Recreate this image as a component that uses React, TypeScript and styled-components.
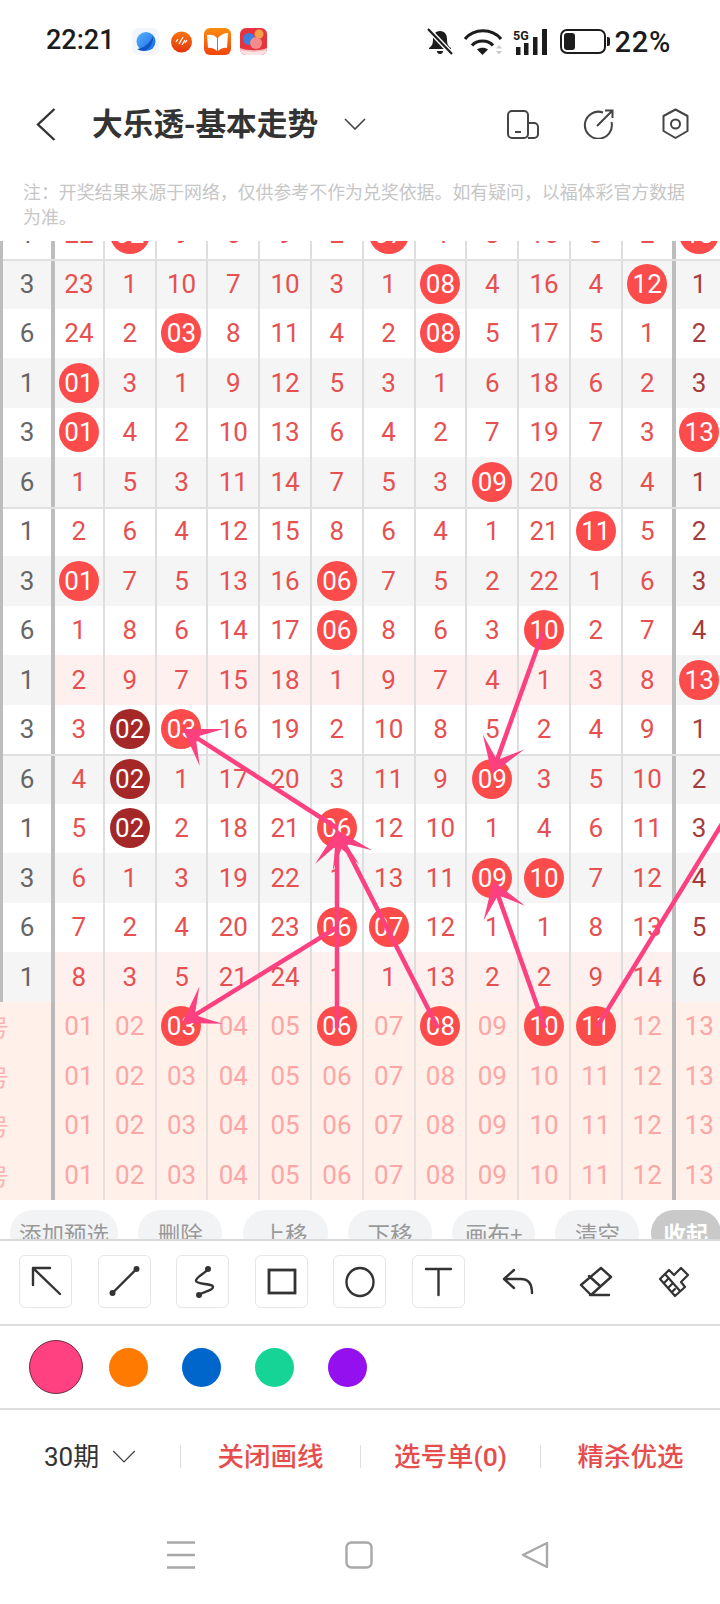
import React from "react";
import styled, { createGlobalStyle } from "styled-components";

const GlobalStyle = createGlobalStyle`
  html, body {
    margin: 0;
    padding: 0;
    background: #fff;
  }
  body {
    width: 720px;
    height: 1604px;
    overflow: hidden;
    font-family: Roboto, "Noto Sans CJK SC", sans-serif;
  }
  * { box-sizing: border-box; }
`;

const Page = styled.div`
  width: 720px;
  height: 1604px;
  overflow: hidden;
  display: flex;
  flex-direction: column;
  background: #fff;
`;

/* status bar */
const StatusBar = styled.div`
  height: 83px;
  flex: none;
  display: flex;
  align-items: center;
  padding: 0 49px 0 46px;
  color: #1c1c1c;
`;

const Clock = styled.div`
  font-size: 27px;
  font-weight: 500;
  width: 86px;
  padding-bottom: 3px;
`;

const AppIcons = styled.div`
  display: flex;
  gap: 9px;
`;

const StatusRight = styled.div`
  margin-left: auto;
  display: flex;
  align-items: center;
  gap: 11px;
`;

const Battery = styled.div`
  margin-left: 1px;
  width: 46px;
  height: 25px;
  border: 2px solid #1c1c1c;
  border-radius: 7px;
  padding: 2px 0 2px 2px;
  position: relative;
  &::before {
    content: "";
    display: block;
    width: 11px;
    height: 100%;
    border-radius: 3px;
    background: #1c1c1c;
  }
  &::after {
    content: "";
    position: absolute;
    right: -6px;
    top: 6px;
    width: 3px;
    height: 9px;
    border-radius: 0 2px 2px 0;
    background: #1c1c1c;
  }
`;

const Percent = styled.div`
  margin-left: -2px;
  font-size: 29px;
  font-weight: 500;
  letter-spacing: 0.7px;
`;

/* title bar */
const NavBar = styled.div`
  height: 82px;
  flex: none;
  display: flex;
  align-items: center;
  padding-left: 36px;
  color: #333;
`;

const Title = styled.div`
  margin-left: 36px;
  padding-bottom: 5px;
  font-size: 30.7px;
  font-weight: 700;
  font-family: "Noto Sans CJK SC", sans-serif;
  color: #333;
  width: 252px;
  white-space: nowrap;
`;

const NavIcons = styled.div`
  display: flex;
  margin-left: 141px;
  gap: 44px;
  align-items: center;
  & > svg:last-child {
    margin-left: 3px;
  }
`;

const Note = styled.div`
  height: 76px;
  flex: none;
  padding: 14px 30px 0 23px;
  font-family: "Noto Sans CJK SC", sans-serif;
  font-size: 17.9px;
  line-height: 25px;
  color: #c6c6c6;
`;

/* trend board */
const Board = styled.div`
  position: relative;
  height: 958.5px;
  flex: none;
  overflow: hidden;
`;

const Rows = styled.div`
  margin-top: -31.5px;
`;

type Tone = "white" | "gray" | "pink" | "draw";

const toneColor: Record<Tone, string> = {
  white: "#fff",
  gray: "#f5f5f5",
  pink: "#fff0f0",
  draw: "#fff0ea",
};

const Row = styled.div<{ $group?: boolean }>`
  position: relative;
  display: grid;
  grid-template-columns: 55px 49.8px repeat(10, 51.8px) 52.9px 47px;
  width: 722.7px;
  height: 49.5px;
  &::after {
    content: "";
    display: ${(p) => (p.$group ? "block" : "none")};
    position: absolute;
    left: 3px;
    right: 0;
    top: 0;
    height: 2px;
    background: #e0e0e0;
  }
`;

const PeriodCell = styled.div<{ $tone: Tone }>`
  display: flex;
  align-items: center;
  justify-content: center;
  font-size: 26px;
  color: #666;
  background: ${(p) => toneColor[p.$tone]};
  border-left: 3px solid #bdbdbd;
  border-right: 4px solid #bdbdbd;
`;

const LabelCell = styled.div`
  overflow: hidden;
  display: flex;
  align-items: center;
  background: #fff0ea;
  border-right: 4px solid #bdb8b8;
  font-family: "Noto Sans CJK SC", sans-serif;
  font-size: 23px;
  color: #fdb0b0;
`;

const LabelText = styled.span`
  flex: none;
  margin-left: -37px;
`;

const Cell = styled.div<{ $tone: Tone; $thick?: boolean; $last?: boolean }>`
  display: flex;
  align-items: center;
  justify-content: center;
  font-size: 26px;
  overflow: visible;
  background: ${(p) => toneColor[p.$tone]};
  color: ${(p) => (p.$tone === "draw" ? "#fca6a6" : p.$last ? "#a53c3c" : "#e65050")};
  border-right: ${(p) => {
    if (p.$last) return "none";
    if (p.$thick) return `4px solid ${p.$tone === "draw" ? "#bdb8b8" : "#bdbdbd"}`;
    return `2px solid ${p.$tone === "draw" ? "#e6dfdc" : "#dedede"}`;
  }};
`;

const Ball = styled.div<{ $dark?: boolean }>`
  flex: none;
  width: 40px;
  height: 40px;
  border-radius: 50%;
  display: flex;
  align-items: center;
  justify-content: center;
  color: #fff;
  background: ${(p) => (p.$dark ? "#a42828" : "#fb4b4b")};
`;

const ArrowLayer = styled.svg`
  position: absolute;
  left: 0;
  top: 0;
  pointer-events: none;
`;

/* chips */
const ChipRow = styled.div`
  height: 39.5px;
  flex: none;
  overflow: hidden;
  padding: 10px 0 0 10px;
  display: flex;
  gap: 20.3px;
`;

const Chip = styled.div<{ $width: number; $active?: boolean }>`
  flex: none;
  width: ${(p) => p.$width}px;
  height: 46px;
  margin-left: ${(p) => (p.$active ? -9 : 0)}px;
  border-radius: 23px;
  display: flex;
  align-items: center;
  justify-content: center;
  font-family: "Noto Sans CJK SC", sans-serif;
  font-size: 22.5px;
  white-space: nowrap;
  color: ${(p) => (p.$active ? "#fff" : "#999")};
  font-weight: ${(p) => (p.$active ? 700 : 400)};
  background: ${(p) => (p.$active ? "#c9c9c9" : "#f2f3f5")};
`;

/* drawing panel */
const ToolRow = styled.div`
  height: 87px;
  flex: none;
  border-top: 2px solid #d9d9d9;
  border-bottom: 2px solid #dedede;
  padding: 14px 0 0 19px;
  display: flex;
  gap: 25.6px;
`;

const ToolButton = styled.div<{ $plain?: boolean }>`
  flex: none;
  width: 53px;
  height: 53px;
  border-radius: 6px;
  border: 1px solid ${(p) => (p.$plain ? "transparent" : "#e6e6e6")};
`;

const ColorRow = styled.div`
  height: 84px;
  flex: none;
  border-bottom: 2px solid #dedede;
  padding-left: 29px;
  display: flex;
  align-items: center;
`;

const Swatch = styled.div<{ $color: string; $selected?: boolean }>`
  flex: none;
  width: ${(p) => (p.$selected ? 54 : 39)}px;
  height: ${(p) => (p.$selected ? 54 : 39)}px;
  margin-right: ${(p) => (p.$selected ? 26 : 34)}px;
  border-radius: 50%;
  background: ${(p) => p.$color};
  border: ${(p) => (p.$selected ? "1px solid #6b2a45" : "none")};
`;

/* bottom actions */
const ActionBar = styled.div`
  height: 95px;
  flex: none;
  display: grid;
  grid-template-columns: 180px 180px 180px 180px;
  align-items: center;
  padding-bottom: 2px;
`;

const Action = styled.div<{ $divider?: boolean }>`
  height: 23px;
  display: flex;
  align-items: center;
  justify-content: center;
  border-left: ${(p) => (p.$divider ? "1px solid #ddd" : "none")};
  font-family: Roboto, "Noto Sans CJK SC", sans-serif;
  font-size: 26.5px;
  font-weight: 500;
  color: #e64d4d;
`;

// text sits a little above the middle of the divider
const ActionText = styled.span`
  position: relative;
  top: -2px;
`;

const PeriodPick = styled.div`
  display: flex;
  align-items: center;
  gap: 13px;
  margin-left: 44px;
  height: 23px;
  font-size: 26px;
  color: #333;
`;

const SystemBar = styled.div`
  flex: 1;
  display: flex;
  padding: 36px 0 0 167px;
  gap: 150px;
  & > svg:last-child {
    margin-left: -2px;
  }
`;

interface ArrowProps {
  from: [number, number];
  to: [number, number];
}

// arrow like the app draws it: thin shaft with a swept back head
const Arrow = ({ from, to }: ArrowProps) => {
  const dx = from[0] - to[0];
  const dy = from[1] - to[1];
  const len = Math.hypot(dx, dy);
  const bx = dx / len;
  const by = dy / len;
  const at = (back: number, side: number) =>
    `${to[0] + bx * back - by * side},${to[1] + by * back + bx * side}`;
  const neck = at(15, 0).split(",");
  return (
    <g>
      <line x1={from[0]} y1={from[1]} x2={neck[0]} y2={neck[1]} stroke="#fd4080" strokeWidth={4.5} />
      <polygon points={`${at(0, 0)} ${at(34, 22)} ${at(15, 0)} ${at(34, -22)}`} fill="#fd4080" />
    </g>
  );
};

const arrows: ArrowProps[] = [
  { from: [543, 632], to: [492, 774] },
  { from: [545, 1028], to: [493, 881] },
  { from: [597, 1027], to: [800, 697] },
  { from: [438, 1028], to: [337, 830] },
  { from: [337, 1028], to: [337, 830] },
  { from: [336, 928], to: [182, 1023] },
  { from: [337, 828], to: [183, 729] },
];

// [nn] is a red ball, {nn} a dark one
const history: [string, Tone, string][] = [
  ["1", "white", "22 [02] 9 6 9 2 [07] 4 3 15 3 2 [13]"],
  ["3", "gray", "23 1 10 7 10 3 1 [08] 4 16 4 [12] 1"],
  ["6", "white", "24 2 [03] 8 11 4 2 [08] 5 17 5 1 2"],
  ["1", "gray", "[01] 3 1 9 12 5 3 1 6 18 6 2 3"],
  ["3", "white", "[01] 4 2 10 13 6 4 2 7 19 7 3 [13]"],
  ["6", "gray", "1 5 3 11 14 7 5 3 [09] 20 8 4 1"],
  ["1", "white", "2 6 4 12 15 8 6 4 1 21 [11] 5 2"],
  ["3", "gray", "[01] 7 5 13 16 [06] 7 5 2 22 1 6 3"],
  ["6", "white", "1 8 6 14 17 [06] 8 6 3 [10] 2 7 4"],
  ["1", "pink", "2 9 7 15 18 1 9 7 4 1 3 8 [13]"],
  ["3", "white", "3 {02} [03] 16 19 2 10 8 5 2 4 9 1"],
  ["6", "gray", "4 {02} 1 17 20 3 11 9 [09] 3 5 10 2"],
  ["1", "white", "5 {02} 2 18 21 [06] 12 10 1 4 6 11 3"],
  ["3", "gray", "6 1 3 19 22 1 13 11 [09] [10] 7 12 4"],
  ["6", "white", "7 2 4 20 23 [06] [07] 12 1 1 8 13 5"],
  ["1", "pink", "8 3 5 21 24 1 1 13 2 2 9 14 6"],
];

const picks = [
  "01 02 [03] 04 05 [06] 07 [08] 09 [10] [11] 12 13",
  "01 02 03 04 05 06 07 08 09 10 11 12 13",
  "01 02 03 04 05 06 07 08 09 10 11 12 13",
  "01 02 03 04 05 06 07 08 09 10 11 12 13",
];

const renderValue = (value: string) => {
  if (value[0] === "[") return <Ball>{value.slice(1, -1)}</Ball>;
  if (value[0] === "{") return <Ball $dark>{value.slice(1, -1)}</Ball>;
  return value;
};

const renderCells = (line: string, tone: Tone) =>
  line.split(" ").map((value, i) => {
    const last = i === 12;
    // blue column stays gray on the pink rows
    const cellTone = last && tone === "pink" ? "gray" : tone;
    return (
      <Cell key={i} $tone={cellTone} $thick={i === 11} $last={last}>
        {renderValue(value)}
      </Cell>
    );
  });

const chips = [
  { text: "添加预选", width: 108 },
  { text: "删除", width: 84 },
  { text: "上移", width: 85 },
  { text: "下移", width: 84 },
  { text: "画布+", width: 83 },
  { text: "清空", width: 84 },
];

const ToolIcon = ({ children }: { children: React.ReactNode }) => (
  <svg width="51" height="51" viewBox="1 1 51 51" fill="none" stroke="#333" strokeWidth="2.4" strokeLinecap="round" strokeLinejoin="round">
    {children}
  </svg>
);

const Chevron = ({ width, height, weight = 1.6 }: { width: number; height: number; weight?: number }) => (
  <svg width={width} height={height} viewBox="0 0 22 12" fill="none" stroke="#444" strokeWidth={weight}>
    <path d="M1 1l10 10L21 1" />
  </svg>
);

export default function App() {
  return (
    <Page>
      <GlobalStyle />
      <StatusBar>
        <Clock>22:21</Clock>
        <AppIcons>
          <svg width="27" height="27" viewBox="0 0 27 27">
            <defs>
              <linearGradient id="planet" x1="0" y1="0" x2="1" y2="1">
                <stop offset="0" stopColor="#5bb4fb" />
                <stop offset="1" stopColor="#1567e6" />
              </linearGradient>
            </defs>
            <rect width="27" height="27" rx="6" fill="#f3f6fa" />
            <circle cx="14" cy="13.5" r="9.5" fill="url(#planet)" />
            <path d="M5 21c5 0 13-5 16-13 1 6-3 13-9 15-3 0-5-1-7-2z" fill="#0f55c9" />
          </svg>
          <svg width="27" height="27" viewBox="0 0 27 27">
            <defs>
              <linearGradient id="sound" x1="0" y1="0" x2="0" y2="1">
                <stop offset="0" stopColor="#f7760f" />
                <stop offset="1" stopColor="#e3340e" />
              </linearGradient>
            </defs>
            <circle cx="13.5" cy="14" r="10.5" fill="url(#sound)" />
            <path d="M8 14l2-3M11 16l4-7M14 17l3-5M17 15l2-3" stroke="#fff" strokeWidth="1.3" />
          </svg>
          <svg width="27" height="27" viewBox="0 0 27 27">
            <defs>
              <linearGradient id="book" x1="0" y1="0" x2="0" y2="1">
                <stop offset="0" stopColor="#fb8c0e" />
                <stop offset="1" stopColor="#f0450f" />
              </linearGradient>
            </defs>
            <rect width="27" height="27" rx="6" fill="url(#book)" />
            <path d="M3 7c4-1 8 0 10 3v13c-2-2-6-4-9-3zM24 5c-4 0-8 2-10 5v13c2-2 6-4 9-3z" fill="#fff" />
          </svg>
          <svg width="27" height="27" viewBox="0 0 27 27">
            <rect width="27" height="27" rx="6" fill="#e5343e" />
            <path d="M0 21c8 3 19 3 27 0v0a6 6 0 0 1-6 6H6a6 6 0 0 1-6-6z" fill="#fde4e4" />
            <path d="M0 20c8 3 19 3 27 0v2c-8 2-19 2-27 0z" fill="#f8b9bb" />
            <circle cx="9" cy="11" r="6" fill="#3f7fe0" />
            <circle cx="19" cy="6" r="4.5" fill="#f6a14a" />
            <circle cx="16" cy="15" r="6" fill="#f58a8a" />
          </svg>
        </AppIcons>
        <StatusRight>
          <svg width="26" height="27" viewBox="0 0 26 27">
            <path d="M13 3c-5 0-7 4-7 8 0 5-1 7-4 9v1h22v-1c-3-2-4-4-4-9 0-4-2-8-7-8z" fill="#1c1c1c" />
            <path d="M10 23h6c0 2-1 3-3 3s-3-1-3-3z" fill="#1c1c1c" />
            <path d="M1 1l24 25" stroke="#fff" strokeWidth="5" />
            <path d="M1 1l24 25" stroke="#1c1c1c" strokeWidth="2.2" />
          </svg>
          <svg width="38" height="26" viewBox="0 0 38 26" fill="none">
            <path d="M1 10C10 -1 28 -1 37 10" stroke="#1c1c1c" strokeWidth="3.2" />
            <path d="M8 16.500C13 10.500 24 10.500 29 16.500" stroke="#1c1c1c" strokeWidth="3.2" />
            <path d="M18.500 26l-5.500-5.500c3-2.500 8-2.500 11 0z" fill="#1c1c1c" />
            <path d="M35 16l-3 3.500h6zM35 25.500l-3-3.500h6z" fill="#c9c9c9" />
          </svg>
          <svg width="35" height="26" viewBox="0 0 35 26">
            <text x="0" y="10.500" fontFamily="Roboto" fontWeight="700" fontSize="12.500" fill="#1c1c1c">5G</text>
            <rect x="3" y="18" width="4.500" height="8" fill="#1c1c1c" />
            <rect x="11" y="14" width="4.500" height="12" fill="#1c1c1c" />
            <rect x="20" y="8" width="4.500" height="18" fill="#1c1c1c" />
            <rect x="29" y="0" width="5" height="26" fill="#1c1c1c" />
          </svg>
          <Battery />
          <Percent>22%</Percent>
        </StatusRight>
      </StatusBar>

      <NavBar>
        <svg width="20" height="33" viewBox="0 0 20 33" fill="none" stroke="#333" strokeWidth="2.4">
          <path d="M18.500 1L2 16.500 18.500 32" />
        </svg>
        <Title>大乐透-基本走势</Title>
        <Chevron width={22} height={12} />
        <NavIcons>
          <svg width="32" height="29" viewBox="0 0 32 29" fill="none" stroke="#444" strokeWidth="2">
            <rect x="1" y="1" width="20" height="27" rx="4" />
            <path d="M21 13h6a4 4 0 0 1 4 4v7a4 4 0 0 1-4 4h-6" />
            <path d="M8 22h6" />
          </svg>
          <svg width="31" height="30" viewBox="0 0 31 30" fill="none" stroke="#444" strokeWidth="2">
            <path d="M20 3.500A13.500 13.500 0 1 0 28.500 13" />
            <path d="M14 17L29 2M22 1.500h7.500V9" />
          </svg>
          <svg width="29" height="32" viewBox="0 0 29 32" fill="none" stroke="#444" strokeWidth="2">
            <path d="M14.500 1.500l12 6.500v15l-12 7-12-7V8z" strokeLinejoin="round" />
            <circle cx="14.500" cy="16" r="4.500" />
          </svg>
        </NavIcons>
      </NavBar>

      <Note>注：开奖结果来源于网络，仅供参考不作为兑奖依据。如有疑问，以福体彩官方数据为准。</Note>

      <Board>
        <Rows>
          {history.map(([period, tone, line], i) => (
            <Row key={i} $group={i % 5 === 1}>
              <PeriodCell $tone={tone === "pink" ? "gray" : tone}>{period}</PeriodCell>
              {renderCells(line, tone)}
            </Row>
          ))}
          {picks.map((line, i) => (
            <Row key={i}>
              <LabelCell>
                <LabelText>选号</LabelText>
              </LabelCell>
              {renderCells(line, "draw")}
            </Row>
          ))}
        </Rows>
        <ArrowLayer width="720" height="958" viewBox="0 241 720 958">
          {arrows.map((a, i) => (
            <Arrow key={i} from={a.from} to={a.to} />
          ))}
        </ArrowLayer>
      </Board>

      <ChipRow>
        {chips.map((c) => (
          <Chip key={c.text} $width={c.width}>
            {c.text}
          </Chip>
        ))}
        <Chip $width={70} $active>
          收起
        </Chip>
      </ChipRow>

      <ToolRow>
        <ToolButton>
          <ToolIcon>
            <path d="M31 13H14v17M14 13l27 26" />
          </ToolIcon>
        </ToolButton>
        <ToolButton>
          <ToolIcon>
            <path d="M14.500 38L38.500 14" />
            <circle cx="14.500" cy="38" r="1.800" fill="#333" />
            <circle cx="38.500" cy="14" r="1.800" fill="#333" />
          </ToolIcon>
        </ToolButton>
        <ToolButton>
          <ToolIcon>
            <path d="M32 14c-2 4-13 8-12 12s17 2 17 6-9 4-14 8" />
            <circle cx="32" cy="14" r="1.800" fill="#333" />
            <circle cx="23" cy="40" r="1.800" fill="#333" />
          </ToolIcon>
        </ToolButton>
        <ToolButton>
          <ToolIcon>
            <rect x="14" y="15" width="26" height="23" strokeLinejoin="miter" strokeWidth="2.800" />
          </ToolIcon>
        </ToolButton>
        <ToolButton>
          <ToolIcon>
            <ellipse cx="27" cy="27" rx="13.500" ry="14" />
          </ToolIcon>
        </ToolButton>
        <ToolButton>
          <ToolIcon>
            <path d="M14 14h25M26.500 14v26" />
          </ToolIcon>
        </ToolButton>
        <ToolButton $plain>
          <ToolIcon>
            <path d="M23 15l-10 9 10 9M13 24h17c7 0 11 5 11 14" />
          </ToolIcon>
        </ToolButton>
        <ToolButton $plain>
          <ToolIcon>
            <path d="M32 13l10 9-20 18-10-10zM20 21l11 10M21 40h19" />
          </ToolIcon>
        </ToolButton>
        <ToolButton $plain>
          <ToolIcon>
            <path d="M12 24l9-9 5 5 7-7 7 7-7 7 4 5-10 9zM17 19l15 17M16 28l4-4M20 33l4-4M24 37l3-3" strokeWidth="2.200" />
          </ToolIcon>
        </ToolButton>
      </ToolRow>

      <ColorRow>
        <Swatch $color="#ff4081" $selected />
        <Swatch $color="#ff7a00" />
        <Swatch $color="#0066cc" />
        <Swatch $color="#16d496" />
        <Swatch $color="#9510ee" />
      </ColorRow>

      <ActionBar>
        <PeriodPick>
          <ActionText>30期</ActionText>
          <Chevron width={24} height={13} weight={1.2} />
        </PeriodPick>
        <Action $divider>
          <ActionText>关闭画线</ActionText>
        </Action>
        <Action $divider>
          <ActionText>选号单(0)</ActionText>
        </Action>
        <Action $divider>
          <ActionText>精杀优选</ActionText>
        </Action>
      </ActionBar>

      <SystemBar>
        <svg width="28" height="28" viewBox="0 0 28 28" stroke="#a8a8a8" strokeWidth="2.600">
          <path d="M0 1.500h28M0 14h28M0 26.500h28" />
        </svg>
        <svg width="28" height="28" viewBox="0 0 28 28" fill="none" stroke="#a8a8a8" strokeWidth="2.400">
          <rect x="1.500" y="1.500" width="25" height="25" rx="5" />
        </svg>
        <svg width="28" height="28" viewBox="0 0 28 28" fill="none" stroke="#a8a8a8" strokeWidth="2.400" strokeLinejoin="round">
          <path d="M26 2v24L2 14z" />
        </svg>
      </SystemBar>
    </Page>
  );
}
